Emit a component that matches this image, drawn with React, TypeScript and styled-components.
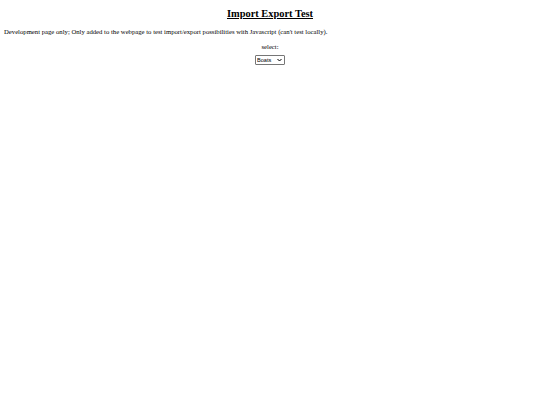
import React, { useState } from 'react';
import styled, { createGlobalStyle } from 'styled-components';

const GlobalStyle = createGlobalStyle`
    body {
        margin: 4px;
        background: #ffffff;
        color: #000000;
        font-family: "Liberation Serif", "Times New Roman", serif;
        font-size: 6.7px;
    }
`;

const Page = styled.div`
    display: flex;
    flex-direction: column;
`;

const Title = styled.h3`
    font-size: 10.4px;
    font-weight: bold;
    text-align: center;
    text-decoration: underline;
    line-height: 12px;
    margin: 4px 0 8px 0;
`;

const Note = styled.p`
    margin: 0 0 7px 0;
    font-size: 6.7px;
    line-height: 8px;
`;

const Form = styled.div`
    display: flex;
    flex-direction: column;
    align-items: center;
    gap: 4px;
`;

const Label = styled.label`
    font-size: 6.7px;
    line-height: 8px;
`;

const SelectBox = styled.div`
    display: flex;
    align-items: center;
    gap: 2px;
    height: 8px;
    padding: 0 2px 0 1px;
    border: 1px solid #767676;
    border-radius: 1px;
    background: #ffffff;
`;

const Select = styled.select`
    appearance: none;
    font-family: "Liberation Sans", Arial, sans-serif;
    font-size: 5.6px;
    line-height: 8px;
    height: 8px;
    padding: 0;
    margin: 0;
    border: none;
    outline: none;
    background: transparent;
    color: #000000;
`;

const Chevron = () => (
    <svg width="5" height="4" viewBox="0 0 10 8">
        <path d="M1 2 L5 6 L9 2" fill="none" stroke="#000" strokeWidth="2" />
    </svg>
);

const App = () => {
    const [choice, setChoice] = useState('Boats');

    return (
        <Page>
            <GlobalStyle />
            <Title>Import Export Test</Title>
            <Note>
                Development page only; Only added to the webpage to test import/export possibilities with Javascript (can't test locally).
            </Note>
            <Form>
                <Label htmlFor="pick">select:</Label>
                <SelectBox>
                    <Select id="pick" value={choice} onChange={e => setChoice(e.target.value)}>
                        <option value="Boats">Boats</option>
                        <option value="Cars">Cars</option>
                        <option value="Planes">Planes</option>
                    </Select>
                    <Chevron />
                </SelectBox>
            </Form>
        </Page>
    );
};

export default App;
